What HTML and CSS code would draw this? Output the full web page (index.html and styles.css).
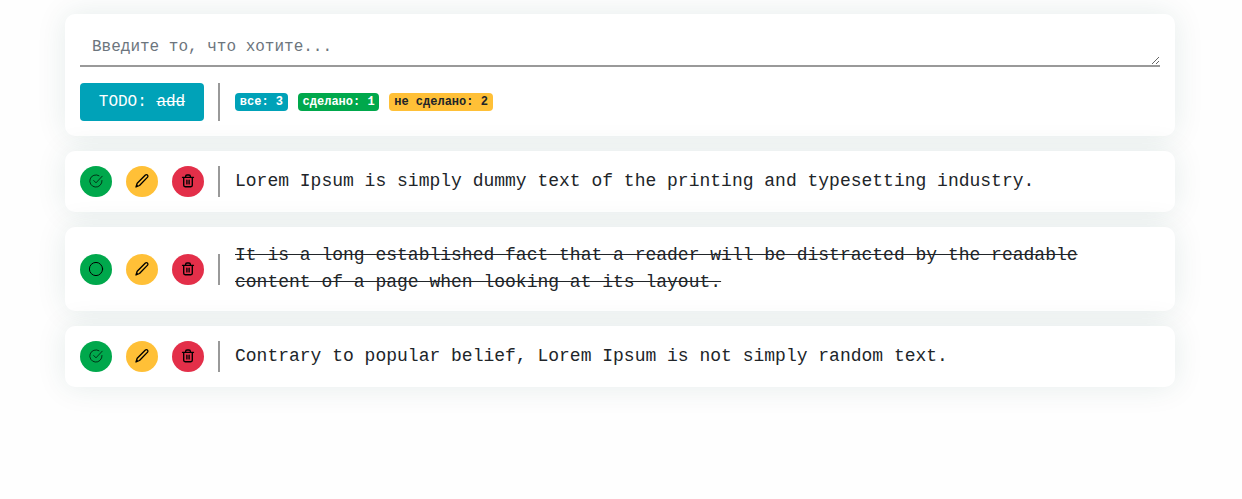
FILE: index.html
```html
<!DOCTYPE html>
<html lang="ru">
<head>
<meta charset="utf-8">
<title>TODO</title>
<link rel="stylesheet" href="styles.css">
</head>
<body>
<svg class="sprite" aria-hidden="true">
  <symbol id="check" viewBox="0 0 16 16"><path d="M14 7.500A6.100 6.100 0 1 1 11 2.700M5.700 7.500l2.300 2.300 6.200-6.600"/></symbol>
  <symbol id="circle" viewBox="0 0 16 16"><circle cx="8" cy="8" r="6.600"/></symbol>
  <symbol id="pencil" viewBox="0 0 16 16"><path d="M2 14l1.200-3.800 8.200-8.200q1-.8 2 .1t.2 2L5.500 12.500zM2.300 13.300l1.300-.4"/></symbol>
  <symbol id="trash" viewBox="0 0 16 16"><path d="M2.500 4.300h11M5.600 4.300V3.500q0-1.500 1.400-1.500h2q1.400 0 1.400 1.500v.8M3.700 4.300v8q0 1.400 1.400 1.400h5.800q1.400 0 1.400-1.400v-8M6.900 7.200v3.700M9.100 7.200v3.700"/></symbol>
</svg>
<main class="todo">
  <section class="card">
    <textarea class="input" rows="1" placeholder="Введите то, что хотите..."></textarea>
    <div class="toolbar">
      <button class="add">TODO: <s>add</s></button>
      <div class="badges">
        <span class="badge info">все: 3</span>
        <span class="badge done">сделано: 1</span>
        <span class="badge wait">не сделано: 2</span>
      </div>
    </div>
  </section>
  <article class="card task">
    <div class="actions">
      <button class="act done"><svg class="icon thin"><use href="#check"/></svg></button>
      <button class="act wait"><svg class="icon"><use href="#pencil"/></svg></button>
      <button class="act del"><svg class="icon"><use href="#trash"/></svg></button>
    </div>
    <p class="text">Lorem Ipsum is simply dummy text of the printing and typesetting industry.</p>
  </article>
  <article class="card task">
    <div class="actions">
      <button class="act done"><svg class="icon ring"><use href="#circle"/></svg></button>
      <button class="act wait"><svg class="icon"><use href="#pencil"/></svg></button>
      <button class="act del"><svg class="icon"><use href="#trash"/></svg></button>
    </div>
    <p class="text struck">It is a long established fact that a reader will be distracted by the readable content of a page when looking at its layout.</p>
  </article>
  <article class="card task">
    <div class="actions">
      <button class="act done"><svg class="icon thin"><use href="#check"/></svg></button>
      <button class="act wait"><svg class="icon"><use href="#pencil"/></svg></button>
      <button class="act del"><svg class="icon"><use href="#trash"/></svg></button>
    </div>
    <p class="text">Contrary to popular belief, Lorem Ipsum is not simply random text.</p>
  </article>
</main>
</body>
</html>
```
FILE: styles.css
```css
* { box-sizing: border-box; }
body { margin: 0; padding: 14px 0 0 65px; min-height: 499px; background: #fefefe; color: #212529; font-family: "Liberation Mono", monospace; }
.sprite { display: none; }
.todo { width: 1110px; display: flex; flex-direction: column; gap: 15px; }
.card { padding: 15px; border-radius: 10px; background: #fff; box-shadow: 0 0 30px rgba(0, 75, 70, .1); }
.input { display: block; width: 100%; height: 38px; padding: 6px 12px; border: 0; border-bottom: 2px solid #999; background: transparent; color: #495057; font: 16px/24px "Liberation Mono", monospace; resize: vertical; outline: 0; overflow: hidden; }
.input::placeholder { color: #6c757d; }
.toolbar { display: flex; margin-top: 16px; height: 38px; }
.add { width: 124px; border: 0; border-radius: 4px; padding: 0; background: #00a2b8; color: #fff; font: 16px/24px "Liberation Mono", monospace; }
.badges { display: flex; align-items: center; gap: 10px; margin-left: 14px; padding-left: 15px; border-left: 2px solid #999; }
.badge { padding: 3px 4.8px; border-radius: 4px; font-size: 12px; line-height: 12px; font-weight: 700; color: #fff; }
.info { background: #00a2b8; }
.done { background: #00a84c; }
.wait { background: #ffc037; color: #212529; }
.del { background: #e32f49; }
.task { display: flex; align-items: center; }
.actions { display: flex; gap: 14px; padding-right: 14px; border-right: 2px solid #999; flex: none; }
.act { display: grid; place-items: center; width: 32px; height: 31px; padding: 0 0 1px; border: 0; border-radius: 50%; }
.icon { width: 16px; height: 16px; fill: none; stroke: #000; stroke-width: 1.35; stroke-linecap: round; stroke-linejoin: round; }
.thin { stroke-width: .7; }
.ring { stroke-width: 1; }
.text { margin: 0 0 0 15px; font-size: 18px; line-height: 27px; }
.struck { text-decoration: line-through; }
```
